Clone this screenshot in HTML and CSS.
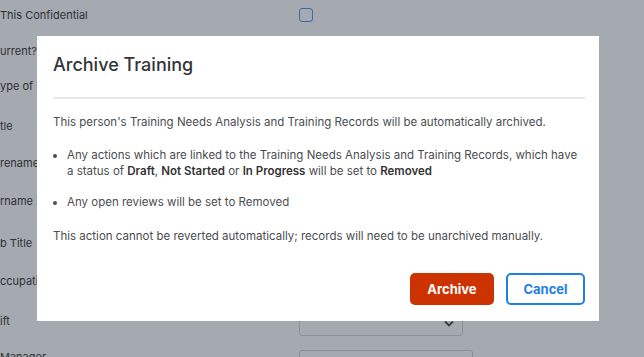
FILE: index.html
```html
<!DOCTYPE html>
<html>
<head>
<meta charset="utf-8">
<link rel="stylesheet" href="styles.css">
</head>
<body>
<div class="form">
  <div class="row r1"><span class="label">This Confidential</span><span class="checkbox"></span></div>
  <div class="row r2"><span class="label">urrent?</span></div>
  <div class="row r3"><span class="label">ype of Person</span></div>
  <div class="row r4"><span class="label">tle</span></div>
  <div class="row r5"><span class="label">rename</span></div>
  <div class="row r6"><span class="label">rname *</span></div>
  <div class="row r7"><span class="label">b Title</span></div>
  <div class="row r8"><span class="label">ccupation</span></div>
  <div class="row r9"><span class="label">ift</span><span class="select"><svg width="10" height="7" viewBox="0 0 10 7"><path d="M1 1.5 L5 5.5 L9 1.5" fill="none" stroke="#3a3d42" stroke-width="1.8"/></svg></span></div>
  <div class="row r10"><span class="label">Manager</span><span class="input"></span></div>
</div>

<div class="modal">
  <div class="modal-header">Archive Training</div>
  <div class="modal-body">
    <p>This person's Training Needs Analysis and Training Records will be automatically archived.</p>
    <ul>
      <li>Any actions which are linked to the Training Needs Analysis and Training Records, which have a status of <b>Draft</b>, <b>Not Started</b> or <b>In Progress</b> will be set to <b>Removed</b></li>
      <li>Any open reviews will be set to Removed</li>
    </ul>
    <p class="last">This action cannot be reverted automatically; records will need to be unarchived manually.</p>
  </div>
  <div class="modal-footer">
    <button class="btn btn-archive">Archive</button>
    <button class="btn btn-cancel">Cancel</button>
  </div>
</div>
</body>
</html>
```
FILE: styles.css
```css
html, body {
  margin: 0;
  padding: 0;
}
body {
  width: 644px;
  height: 357px;
  overflow: hidden;
  background: #a5a9b0;
  font-family: Inter, "Noto Sans", sans-serif;
  position: relative;
}
.form {
  padding-top: 7px;
  display: flex;
  flex-direction: column;
}
.row {
  display: flex;
  align-items: flex-start;
  height: 38px;
}
.r1 { height: 36px; }
.r2 { height: 35px; }
.r3 { height: 40px; }
.r4 { height: 37px; }
.r5 { height: 38px; }
.r6 { height: 42px; }
.r7 { height: 38px; }
.r8 { height: 40px; }
.r9 { height: 36px; }
.r10 { height: 8px; overflow: hidden; }
.label {
  width: 299px;
  flex: none;
  font-size: 11px;
  line-height: 16px;
  color: #2e3136;
  white-space: nowrap;
}
.checkbox {
  width: 12px;
  height: 12px;
  border: 1.5px solid #3f68a6;
  border-radius: 3px;
  margin-top: 1px;
}
.select {
  width: 164px;
  height: 28px;
  margin-top: -5px;
  border: 1px solid #8b8f96;
  border-radius: 3px;
  display: flex;
  align-items: flex-end;
  justify-content: flex-end;
  padding: 0 8px 8px 0;
  box-sizing: border-box;
}
.input {
  width: 172px;
  height: 28px;
  margin-top: 1px;
  border: 1px solid #8b8f96;
  border-radius: 3px;
}
.modal {
  position: absolute;
  left: 37px;
  top: 36px;
  width: 562px;
  height: 285px;
  background: #ffffff;
  box-sizing: border-box;
  padding: 17px 14px 16px 16px;
  display: flex;
  flex-direction: column;
}
.modal-header {
  font-size: 18px;
  line-height: 24px;
  font-weight: 500;
  color: #333538;
  padding-bottom: 20px;
  border-bottom: 2px solid #e8e8e8;
  margin-bottom: 15px;
}
.modal-body {
  font-size: 11.5px;
  line-height: 16px;
  color: #4b4d50;
  flex: 1;
}
.modal-body p {
  margin: 0;
}
.modal-body ul {
  margin: 17px 0 18px 0;
  padding-left: 14px;
}
.modal-body li + li {
  margin-top: 15px;
}
.modal-body b {
  color: #333;
  font-weight: 600;
}
.modal-footer {
  display: flex;
  justify-content: flex-end;
  gap: 12px;
}
.btn {
  height: 32px;
  border-radius: 5px;
  font-family: inherit;
  font-size: 13px;
  font-weight: 700;
  padding: 0;
  cursor: pointer;
}
.btn-archive {
  width: 84px;
  background: #cc3300;
  color: #ffffff;
  border: none;
}
.btn-cancel {
  width: 79px;
  background: #ffffff;
  color: #1f80e6;
  border: 2px solid #1f80e6;
}
```
